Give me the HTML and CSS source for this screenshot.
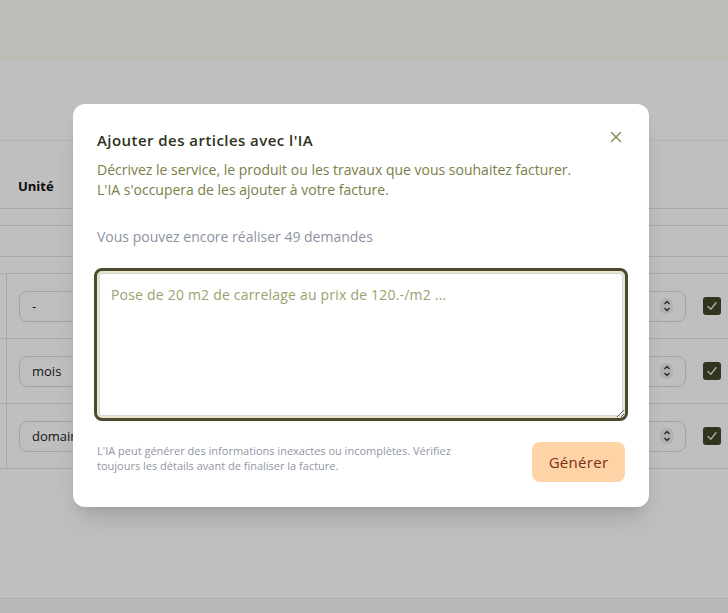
FILE: index.html
```html
<!DOCTYPE html>
<html lang="fr">
<head>
<meta charset="utf-8">
<title>Ajouter des articles avec l'IA</title>
<link rel="stylesheet" href="styles.css">
</head>
<body>
<div class="page">
  <header class="topbar"></header>
  <main class="content">
    <div class="section-gap"></div>
    <div class="thead"><div class="th">Unité</div></div>
    <div class="band band-a"></div>
    <div class="band band-b"></div>
    <div class="band band-c"></div>
    <div class="rows">
      <div class="row">
        <div class="edge"></div>
        <div class="cell-unit"><div class="select">-</div></div>
        <div class="fill"></div>
        <div class="num"><span class="spin"><svg width="10" height="14" viewBox="0 0 10 14"><path d="M2.5 5 L5 2.5 L7.5 5 M2.5 9 L5 11.5 L7.5 9" fill="none" stroke="#333" stroke-width="1.3"/></svg></span></div>
        <div class="check"><svg width="12" height="12" viewBox="0 0 12 12"><path d="M2 6.5 L4.8 9.2 L10 2.8" fill="none" stroke="#e0e0d8" stroke-width="1.5" stroke-linecap="round" stroke-linejoin="round"/></svg></div>
      </div>
      <div class="row">
        <div class="edge"></div>
        <div class="cell-unit"><div class="select">mois</div></div>
        <div class="fill"></div>
        <div class="num"><span class="spin"><svg width="10" height="14" viewBox="0 0 10 14"><path d="M2.5 5 L5 2.5 L7.5 5 M2.5 9 L5 11.5 L7.5 9" fill="none" stroke="#333" stroke-width="1.3"/></svg></span></div>
        <div class="check"><svg width="12" height="12" viewBox="0 0 12 12"><path d="M2 6.5 L4.8 9.2 L10 2.8" fill="none" stroke="#e0e0d8" stroke-width="1.5" stroke-linecap="round" stroke-linejoin="round"/></svg></div>
      </div>
      <div class="row">
        <div class="edge"></div>
        <div class="cell-unit"><div class="select">domaine</div></div>
        <div class="fill"></div>
        <div class="num"><span class="spin"><svg width="10" height="14" viewBox="0 0 10 14"><path d="M2.5 5 L5 2.5 L7.5 5 M2.5 9 L5 11.5 L7.5 9" fill="none" stroke="#333" stroke-width="1.3"/></svg></span></div>
        <div class="check"><svg width="12" height="12" viewBox="0 0 12 12"><path d="M2 6.5 L4.8 9.2 L10 2.8" fill="none" stroke="#e0e0d8" stroke-width="1.5" stroke-linecap="round" stroke-linejoin="round"/></svg></div>
      </div>
    </div>
  </main>
  <footer class="bottombar"></footer>
</div>
<div class="overlay"></div>
<div class="modal">
  <div class="modal-head">
    <h2 class="modal-title">Ajouter des articles avec l'IA</h2>
    <button class="close" aria-label="Fermer"><svg width="12" height="12" viewBox="0 0 12 12"><path d="M1.5 1.5 L10.5 10.5 M10.5 1.5 L1.5 10.5" fill="none" stroke="#8a8c5b" stroke-width="1.5" stroke-linecap="round"/></svg></button>
  </div>
  <p class="desc">Décrivez le service, le produit ou les travaux que vous souhaitez facturer.<br>L'IA s'occupera de les ajouter à votre facture.</p>
  <p class="quota">Vous pouvez encore réaliser 49 demandes</p>
  <textarea class="prompt" placeholder="Pose de 20 m2 de carrelage au prix de 120.-/m2 ..."></textarea>
  <div class="modal-foot">
    <p class="note">L'IA peut générer des informations inexactes ou incomplètes. Vérifiez<br>toujours les détails avant de finaliser la facture.</p>
    <button class="generate">Générer</button>
  </div>
</div>
</body>
</html>
```
FILE: styles.css
```css
* { box-sizing: border-box; }
html, body { margin: 0; padding: 0; }
body {
  width: 728px;
  height: 613px;
  overflow: hidden;
  font-family: "Open Sans", "Noto Sans", "Liberation Sans", sans-serif;
  background: #ffffff;
  position: relative;
}
.page {
  display: flex;
  flex-direction: column;
  height: 613px;
}
.topbar {
  height: 60px;
  background: #fcfbf5;
  flex: none;
}
.content {
  flex: 1;
  background: #ffffff;
}
.section-gap { height: 80px; }
.thead {
  height: 69px;
  border-top: 1px solid #f0f0f2;
  border-bottom: 1px solid #e1e2e7;
  padding: 35px 0 0 18px;
}
.th {
  font-weight: 700;
  font-size: 13px;
  line-height: 20px;
  color: #111;
}
.band { border-bottom: 1px solid #e1e2e7; }
.band-a { height: 17px; }
.band-b { height: 31px; }
.band-c { height: 17px; }
.row {
  height: 65px;
  border-bottom: 1px solid #e1e2e7;
  display: flex;
  align-items: center;
}
.edge {
  width: 7px;
  align-self: stretch;
  border-right: 1px solid #e1e2e7;
}
.cell-unit { padding-left: 12px; }
.select {
  width: 200px;
  height: 31px;
  border: 1px solid #d8d9de;
  border-radius: 8px;
  padding: 0 12px;
  font-size: 13px;
  line-height: 29px;
  color: #222;
}
.fill { flex: 1; }
.num {
  width: 130px;
  height: 31px;
  border: 1px solid #d8d9de;
  border-radius: 8px;
  display: flex;
  align-items: center;
  justify-content: flex-end;
  padding-right: 12px;
}
.spin {
  width: 13px;
  height: 16px;
  border-radius: 6px;
  background: #ececec;
  display: flex;
  align-items: center;
  justify-content: center;
}
.check {
  width: 18px;
  height: 18px;
  margin: 0 7px 0 17px;
  border-radius: 3px;
  background: #45462a;
  display: flex;
  align-items: center;
  justify-content: center;
}
.bottombar {
  height: 15px;
  flex: none;
  background: #f6f6f6;
  border-top: 1px solid #e8e8e8;
}
.overlay {
  position: absolute;
  inset: 0;
  background: rgba(0, 0, 0, 0.25);
}
.modal {
  position: absolute;
  left: 73px;
  top: 104px;
  width: 576px;
  padding: 24px 24px 25px;
  background: #ffffff;
  border-radius: 12px;
  box-shadow: 0 18px 25px -6px rgba(0, 0, 0, 0.12), 0 6px 10px -4px rgba(0, 0, 0, 0.08);
}
.modal-head {
  display: flex;
  justify-content: space-between;
  align-items: flex-start;
}
.modal-title {
  margin: 0;
  font-size: 15px;
  font-weight: 600;
  letter-spacing: 0.45px;
  line-height: 24px;
  color: #2f3120;
}
.close {
  border: 0;
  background: none;
  padding: 0;
  margin: 3px 3px 0 0;
  width: 12px;
  height: 12px;
  display: flex;
}
.desc {
  margin: 8px 0 0;
  font-size: 14px;
  line-height: 20px;
  color: #7b7e49;
}
.quota {
  margin: 27px 0 0;
  font-size: 14px;
  line-height: 20px;
  color: #8d92a2;
}
.prompt {
  display: block;
  margin: 21px -3px 0;
  width: calc(100% + 6px);
  height: 153px;
  border: 3px solid #4a4b2f;
  border-radius: 8px;
  box-shadow: inset 0 0 0 2px #ebe6cb, inset 0 0 0 3px #d3d6dc;
  padding: 14px 14px;
  font-family: inherit;
  font-size: 14px;
  letter-spacing: 0.2px;
  line-height: 20px;
  color: #333;
  background: #fff;
  resize: vertical;
  outline: none;
}
.prompt::placeholder { color: #9ca16d; }
.modal-foot {
  margin-top: 21px;
  display: flex;
  justify-content: space-between;
  align-items: flex-start;
}
.note {
  margin: 1px 0 0;
  font-size: 11px;
  line-height: 15px;
  color: #9196a5;
}
.generate {
  width: 93px;
  height: 40px;
  border: 0;
  border-radius: 8px;
  background: #fed3a5;
  color: #7c2d12;
  font-family: inherit;
  font-size: 15px;
  letter-spacing: 0.3px;
}
```
